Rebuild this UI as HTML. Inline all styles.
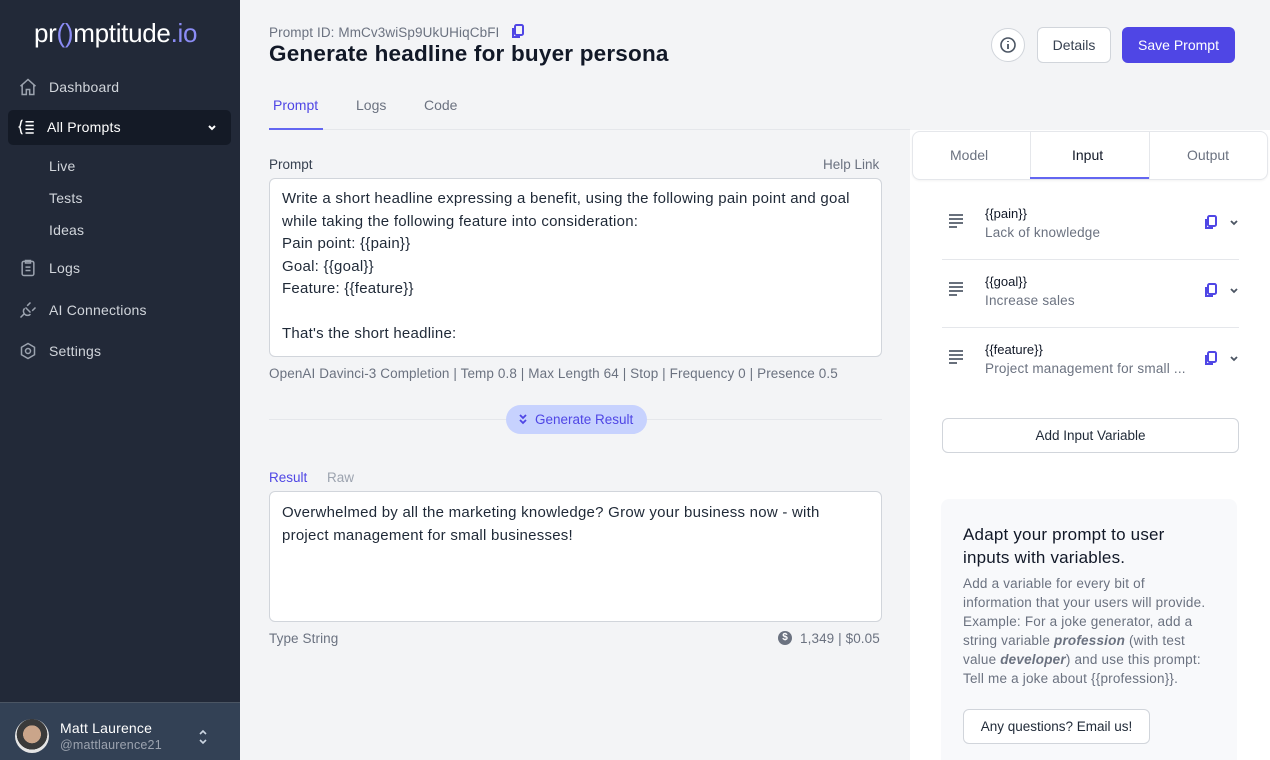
<!DOCTYPE html>
<html><head><meta charset="utf-8"><style>
*{box-sizing:border-box;margin:0;padding:0}
html,body{width:1270px;height:760px;overflow:hidden}
body{font-family:"Liberation Sans",sans-serif;background:#f3f4f6;position:relative;color:#111827}
.a{position:absolute}
.sb{left:0;top:0;width:240px;height:760px;background:#222938}
.nav{left:18px;color:#d1d5db;font-size:14px;display:flex;align-items:center;letter-spacing:0.2px}
.nav span{margin-left:11px}
.sub{left:49px;color:#d1d5db;font-size:14px;letter-spacing:0.2px}
.ta{width:613px;left:269px;background:#fff;border:1px solid #d1d5db;border-radius:6px;padding:9px 12px;font-size:15px;line-height:22.5px;color:#1f2937;letter-spacing:0.25px}
.gray{color:#6b7280;font-size:13.5px;letter-spacing:0.1px}
.var{left:942px;width:297px;height:68px;border-bottom:1px solid #e5e7eb}
.var .ic{position:absolute;left:6px;top:22px}
.var .t{position:absolute;left:43px;top:14px;font-size:13px;color:#111827}
.var .d{position:absolute;left:43px;top:33px;font-size:13.5px;color:#6b7280;letter-spacing:0.2px}
.var .cp{position:absolute;left:262px;top:23px}
.var .ch{position:absolute;left:287px;top:26px}
</style></head><body>
<div class="a sb"></div>
<div class="a" style="left:34px;top:18px;font-size:26px;color:#fff;letter-spacing:-0.3px">pr<span style="color:#8b8cf5">()</span>mptitude<span style="color:#8b8cf5">.io</span></div>
<div class="a nav" style="top:77px"><svg width="20" height="20" viewBox="0 0 24 24" fill="none" stroke="#9ca3af" stroke-width="1.8"><path d="M3 11l9-8 9 8M5 9v12h5v-6h4v6h5V9"/></svg><span>Dashboard</span></div>
<div class="a" style="left:8px;top:110px;width:223px;height:35px;background:#141a26;border-radius:5px"></div>
<div class="a nav" style="top:118px"><svg width="18" height="18" viewBox="0 0 24 24" fill="none" stroke="#fff" stroke-width="2"><path d="M6 3C3 3 4 11 2 12c2 1 1 9 4 9M10 5h11M10 10h11M10 15h11M10 20h11"/></svg><span style="color:#fff;margin-left:11px">All Prompts</span></div>
<svg class="a" style="left:207px;top:124px" width="10" height="8" viewBox="0 0 10 8"><path d="M2 2l3 3 3-3" stroke="#fff" stroke-width="2" fill="none"/></svg>
<div class="a sub" style="top:158px">Live</div>
<div class="a sub" style="top:190px">Tests</div>
<div class="a sub" style="top:222px">Ideas</div>
<div class="a nav" style="top:258px"><svg width="20" height="20" viewBox="0 0 24 24" fill="none" stroke="#9ca3af" stroke-width="1.8"><rect x="5" y="4" width="14" height="17" rx="2"/><path d="M9 3h6v3H9zM9 11h6M9 15h6"/></svg><span>Logs</span></div>
<div class="a nav" style="top:300px"><svg width="20" height="20" viewBox="0 0 24 24" fill="none" stroke="#9ca3af" stroke-width="1.8"><path d="M3 21l5-5M9 9l6 6M11 7l4-4M17 13l4-4M8 10c-2 2-2 5 0 7s5 2 7 0"/></svg><span>AI Connections</span></div>
<div class="a nav" style="top:341px"><svg width="20" height="20" viewBox="0 0 24 24" fill="none" stroke="#9ca3af" stroke-width="1.8"><path d="M12 3l7.8 4.5v9L12 21l-7.8-4.5v-9z"/><circle cx="12" cy="12" r="3"/></svg><span>Settings</span></div>
<div class="a" style="left:0;top:702px;width:240px;height:58px;background:#334155;border-top:1px solid #4b5563"></div>
<div class="a" style="left:15px;top:719px;width:34px;height:34px;border-radius:50%;background:radial-gradient(circle at 50% 45%,#caa58a 0 35%,#3a3a3a 36% 60%,#e5e5e5 61%)"></div>
<div class="a" style="left:60px;top:720px;color:#fff;font-size:14px;letter-spacing:0.2px">Matt Laurence</div>
<div class="a" style="left:60px;top:738px;color:#9ca3af;font-size:12.5px;letter-spacing:0.2px">@mattlaurence21</div>
<svg class="a" style="left:198px;top:729px" width="10" height="16" viewBox="0 0 10 16"><path d="M2 5l3-3 3 3M2 11l3 3 3-3" stroke="#cbd5e1" stroke-width="1.6" fill="none"/></svg>

<div class="a gray" style="left:269px;top:25px;font-size:13.5px">Prompt ID: MmCv3wiSp9UkUHiqCbFI</div>
<svg class="a" style="left:511px;top:24px" width="14" height="15" viewBox="0 0 14 15"><rect x="4" y="1" width="8" height="10" rx="1.5" fill="none" stroke="#4f46e5" stroke-width="2"/><path d="M2 4v9h7" fill="none" stroke="#4f46e5" stroke-width="2"/></svg>
<div class="a" style="left:269px;top:41px;font-size:22.5px;font-weight:bold;color:#111827;letter-spacing:0.2px">Generate headline for buyer persona</div>
<div class="a" style="left:991px;top:28px;width:34px;height:34px;border-radius:50%;background:#fff;border:1px solid #d1d5db"></div>
<svg class="a" style="left:999px;top:36px" width="18" height="18" viewBox="0 0 18 18"><circle cx="9" cy="9" r="7" fill="none" stroke="#4b5563" stroke-width="1.6"/><path d="M9 8v5M9 5v1" stroke="#4b5563" stroke-width="1.8"/></svg>
<div class="a" style="left:1037px;top:27px;width:74px;height:36px;background:#fff;border:1px solid #d1d5db;border-radius:6px;font-size:14px;color:#374151;text-align:center;line-height:34px">Details</div>
<div class="a" style="left:1122px;top:27px;width:113px;height:36px;background:#4f46e5;border-radius:6px;font-size:14px;color:#fff;text-align:center;line-height:36px">Save Prompt</div>

<div class="a" style="left:273px;top:97px;font-size:14px;color:#4f46e5">Prompt</div>
<div class="a" style="left:356px;top:97px;font-size:14px;color:#6b7280">Logs</div>
<div class="a" style="left:424px;top:97px;font-size:14px;color:#6b7280">Code</div>
<div class="a" style="left:269px;top:129px;width:641px;height:1px;background:#e5e7eb"></div>
<div class="a" style="left:269px;top:128px;width:54px;height:2px;background:#6366f1"></div>

<div class="a" style="left:269px;top:157px;font-size:13.5px;color:#374151">Prompt</div>
<div class="a" style="left:823px;top:157px;font-size:13.5px;color:#6b7280">Help Link</div>
<div class="a ta" style="top:178px;height:179px">Write a short headline expressing a benefit, using the following pain point and goal while taking the following feature into consideration:<br>Pain point: {{pain}}<br>Goal: {{goal}}<br>Feature: {{feature}}<br><br>That's the short headline:</div>
<div class="a gray" style="left:269px;top:366px">OpenAI Davinci-3 Completion | Temp 0.8 | Max Length 64 | Stop | Frequency 0 | Presence 0.5</div>
<div class="a" style="left:269px;top:419px;width:613px;height:1px;background:#e5e7eb"></div>
<div class="a" style="left:506px;top:405px;width:141px;height:29px;border-radius:15px;background:#c7d2fe;color:#4f46e5;font-size:13.5px;line-height:29px;padding-left:29px">Generate Result</div>
<svg class="a" style="left:518px;top:413px" width="10" height="12" viewBox="0 0 10 12"><path d="M2 2l3 3 3-3M2 7l3 3 3-3" stroke="#4f46e5" stroke-width="1.8" fill="none"/></svg>
<div class="a" style="left:269px;top:470px;font-size:13.5px;color:#4f46e5">Result</div>
<div class="a" style="left:327px;top:470px;font-size:13.5px;color:#9ca3af">Raw</div>
<div class="a ta" style="top:491px;height:131px;padding-top:10px">Overwhelmed by all the marketing knowledge? Grow your business now - with project management for small businesses!</div>
<div class="a gray" style="left:269px;top:631px">Type String</div>
<div class="a" style="left:778px;top:631px;width:14px;height:14px;border-radius:50%;background:#6b7280;color:#fff;font-size:10px;text-align:center;line-height:14px;font-weight:bold">$</div>
<div class="a gray" style="left:800px;top:631px">1,349 | $0.05</div>

<div class="a" style="left:910px;top:130px;width:360px;height:630px;background:#fff"></div>
<div class="a" style="left:912px;top:131px;width:356px;height:49px;background:#fff;border:1px solid #e5e7eb;border-radius:8px;box-shadow:0 1px 2px rgba(0,0,0,.05)"></div>
<div class="a" style="left:1030px;top:131px;width:1px;height:49px;background:#e5e7eb"></div>
<div class="a" style="left:1149px;top:131px;width:1px;height:49px;background:#e5e7eb"></div>
<div class="a" style="left:1030px;top:177px;width:119px;height:2px;background:#6366f1"></div>
<div class="a" style="left:950px;top:147px;font-size:14px;color:#6b7280">Model</div>
<div class="a" style="left:1072px;top:147px;font-size:14px;color:#111827">Input</div>
<div class="a" style="left:1187px;top:147px;font-size:14px;color:#6b7280">Output</div>

<div class="a var" style="top:192px"><svg class="ic" width="16" height="14" viewBox="0 0 16 14"><path d="M1 1h14M1 5h14M1 9h14M1 13h8" stroke="#374151" stroke-width="1.6"/></svg><div class="t">{{pain}}</div><div class="d">Lack of knowledge</div><svg class="cp" width="14" height="15" viewBox="0 0 14 15"><rect x="4" y="1" width="8" height="10" rx="1.5" fill="none" stroke="#4f46e5" stroke-width="2"/><path d="M2 4v9h7" fill="none" stroke="#4f46e5" stroke-width="2"/></svg><svg class="ch" width="10" height="10" viewBox="0 0 10 10"><path d="M2 3l3 3 3-3" stroke="#4b5563" stroke-width="1.8" fill="none"/></svg></div>
<div class="a var" style="top:260px"><svg class="ic" width="16" height="14" viewBox="0 0 16 14"><path d="M1 1h14M1 5h14M1 9h14M1 13h8" stroke="#374151" stroke-width="1.6"/></svg><div class="t">{{goal}}</div><div class="d">Increase sales</div><svg class="cp" width="14" height="15" viewBox="0 0 14 15"><rect x="4" y="1" width="8" height="10" rx="1.5" fill="none" stroke="#4f46e5" stroke-width="2"/><path d="M2 4v9h7" fill="none" stroke="#4f46e5" stroke-width="2"/></svg><svg class="ch" width="10" height="10" viewBox="0 0 10 10"><path d="M2 3l3 3 3-3" stroke="#4b5563" stroke-width="1.8" fill="none"/></svg></div>
<div class="a var" style="top:328px;border-bottom:none"><svg class="ic" width="16" height="14" viewBox="0 0 16 14"><path d="M1 1h14M1 5h14M1 9h14M1 13h8" stroke="#374151" stroke-width="1.6"/></svg><div class="t">{{feature}}</div><div class="d">Project management for small ...</div><svg class="cp" width="14" height="15" viewBox="0 0 14 15"><rect x="4" y="1" width="8" height="10" rx="1.5" fill="none" stroke="#4f46e5" stroke-width="2"/><path d="M2 4v9h7" fill="none" stroke="#4f46e5" stroke-width="2"/></svg><svg class="ch" width="10" height="10" viewBox="0 0 10 10"><path d="M2 3l3 3 3-3" stroke="#4b5563" stroke-width="1.8" fill="none"/></svg></div>
<div class="a" style="left:942px;top:418px;width:297px;height:35px;border:1px solid #d1d5db;border-radius:6px;text-align:center;line-height:33px;font-size:13.5px;color:#1f2937">Add Input Variable</div>

<div class="a" style="left:941px;top:499px;width:296px;height:261px;background:#f8f9fb;border-radius:8px 8px 0 0"></div>
<div class="a" style="left:963px;top:523px;width:225px;font-size:17px;line-height:23px;color:#111827;letter-spacing:0.2px">Adapt your prompt to user inputs with variables.</div>
<div class="a" style="left:963px;top:574px;width:248px;font-size:13.5px;line-height:19px;color:#6b7280;letter-spacing:0.2px">Add a variable for every bit of information that your users will provide. Example: For a joke generator, add a string variable <b><i>profession</i></b> (with test value <b><i>developer</i></b>) and use this prompt: Tell me a joke about {{profession}}.</div>
<div class="a" style="left:963px;top:709px;width:187px;height:35px;background:#fff;border:1px solid #d1d5db;border-radius:6px;text-align:center;line-height:33px;font-size:13.5px;color:#1f2937">Any questions? Email us!</div>
</body></html>
